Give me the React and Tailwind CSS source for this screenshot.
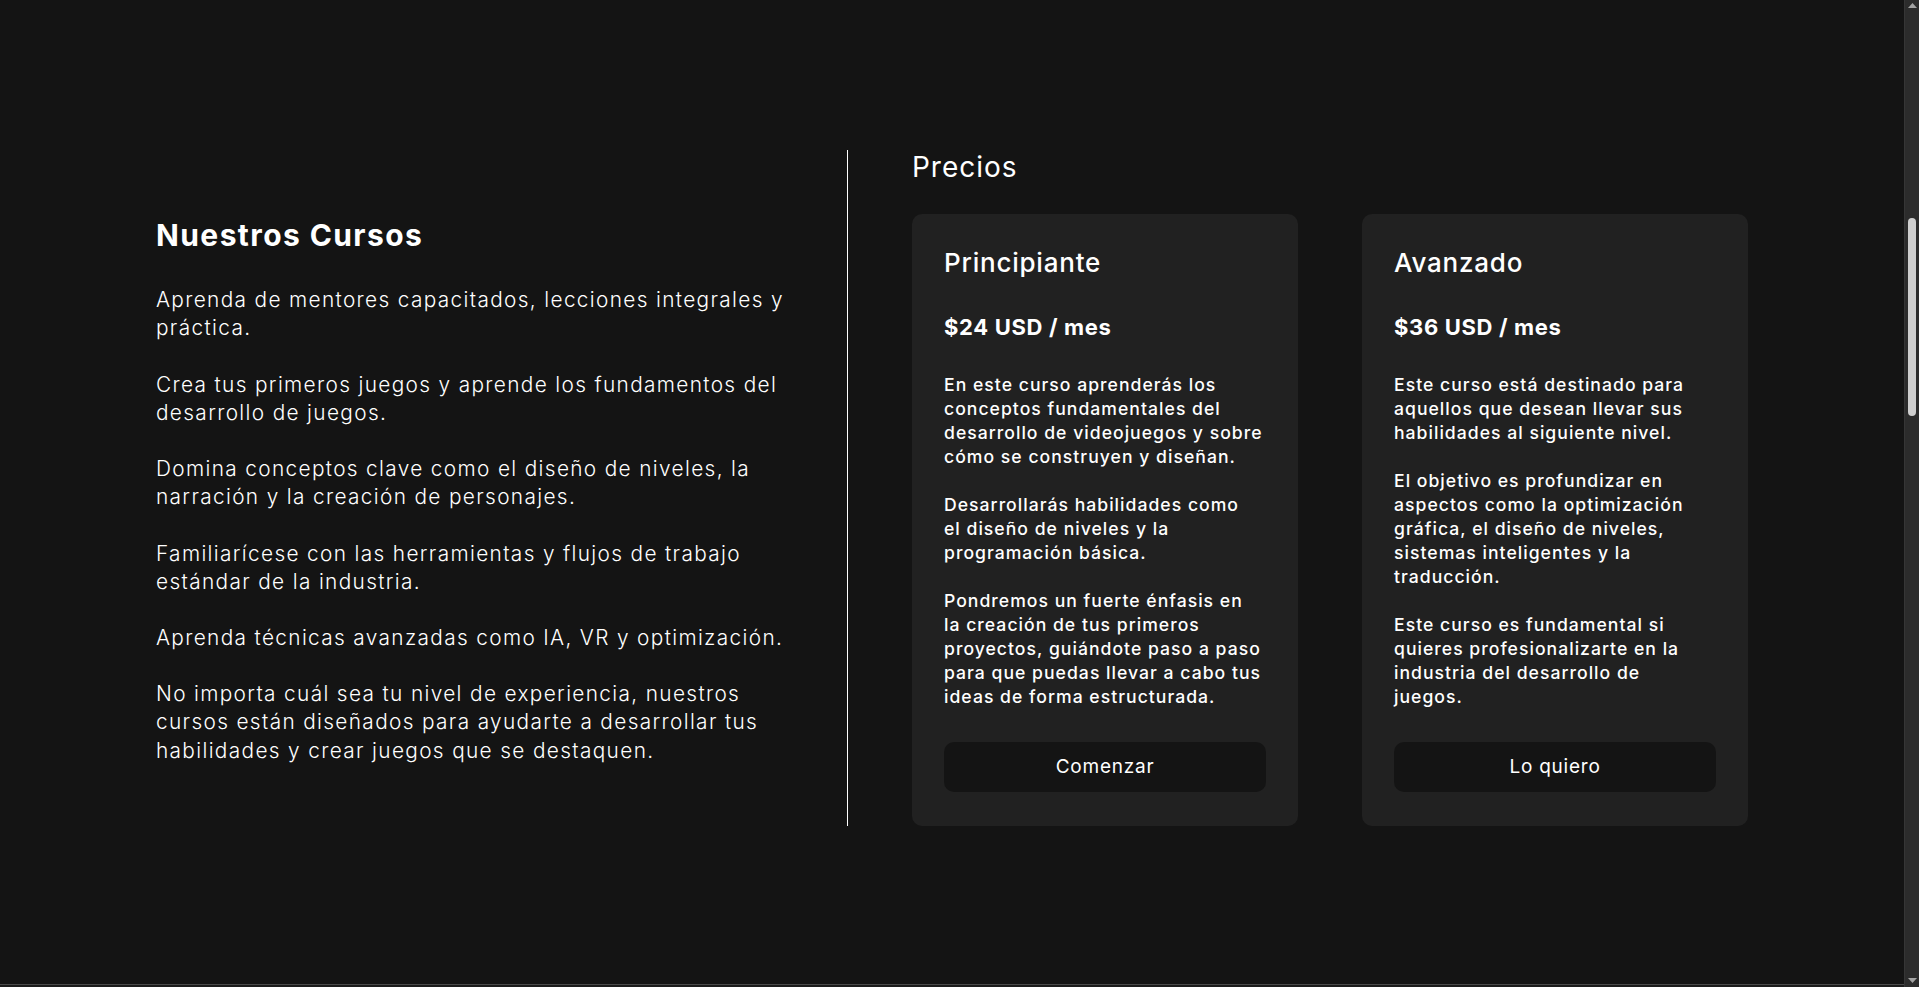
const intro = [
  "Aprenda de mentores capacitados, lecciones integrales y\npráctica.",
  "Crea tus primeros juegos y aprende los fundamentos del\ndesarrollo de juegos.",
  "Domina conceptos clave como el diseño de niveles, la\nnarración y la creación de personajes.",
  "Familiarícese con las herramientas y flujos de trabajo\nestándar de la industria.",
  "Aprenda técnicas avanzadas como IA, VR y optimización.",
  "No importa cuál sea tu nivel de experiencia, nuestros\ncursos están diseñados para ayudarte a desarrollar tus\nhabilidades y crear juegos que se destaquen.",
];

const plans = [
  {
    name: "Principiante",
    price: "$24 USD / mes",
    text: [
      "En este curso aprenderás los\nconceptos fundamentales del\ndesarrollo de videojuegos y sobre\ncómo se construyen y diseñan.",
      "Desarrollarás habilidades como\nel diseño de niveles y la\nprogramación básica.",
      "Pondremos un fuerte énfasis en\nla creación de tus primeros\nproyectos, guiándote paso a paso\npara que puedas llevar a cabo tus\nideas de forma estructurada.",
    ],
    cta: "Comenzar",
  },
  {
    name: "Avanzado",
    price: "$36 USD / mes",
    text: [
      "Este curso está destinado para\naquellos que desean llevar sus\nhabilidades al siguiente nivel.",
      "El objetivo es profundizar en\naspectos como la optimización\ngráfica, el diseño de niveles,\nsistemas inteligentes y la\ntraducción.",
      "Este curso es fundamental si\nquieres profesionalizarte en la\nindustria del desarrollo de\njuegos.",
    ],
    cta: "Lo quiero",
  },
];

function PlanCard({ plan }) {
  return (
    <div className="flex flex-col rounded-[10px] bg-[#212121] px-[32px] pt-[33px] pb-[34px]">
      <h3 className="text-[26px] leading-[32px] font-medium tracking-[0.03em]">{plan.name}</h3>
      <p className="mt-[34px] text-[22px] leading-[28px] font-bold tracking-[0.03em]">{plan.price}</p>
      <div className="mt-[32px] flex-1 space-y-[24px] whitespace-pre-line text-[17.6px] leading-[24px] font-medium tracking-[0.058em]">
        {plan.text.map((t, i) => (
          <p key={i}>{t}</p>
        ))}
      </div>
      <button className="mt-[33px] h-[50px] w-full rounded-[10px] bg-[#141414] text-[19px] font-normal tracking-[0.04em] text-white">
        {plan.cta}
      </button>
    </div>
  );
}

// windows-style dark scrollbar of the browser window
function ScrollBar() {
  return (
    <div className="flex w-[15px] flex-col items-center border-l border-[#363636] bg-[#2c2c2c]">
      <svg className="mt-[3px]" width="9" height="5" viewBox="0 0 9 5">
        <path d="M4.5 0 9 5H0z" fill="#a3a3a3" />
      </svg>
      <div className="mt-[210px] h-[198px] w-[8px] rounded-full bg-[#cfcfcf]" />
      <svg className="mt-auto mb-[4px]" width="9" height="5" viewBox="0 0 9 5">
        <path d="M0 0h9L4.5 5z" fill="#a3a3a3" />
      </svg>
    </div>
  );
}

export default function App() {
  return (
    <div className="flex h-screen overflow-hidden bg-[#141414] font-['Inter',sans-serif] text-white">
      <main className="flex flex-1 flex-col">
        <section className="flex-1 pt-[150px]">
          <div className="mx-auto flex w-[1592px] items-center">
            {/* Cursos */}
            <div className="w-[691px] pt-[7px] pr-[40px]">
              <h2 className="text-[30px] leading-[34px] font-bold tracking-[0.047em]">Nuestros Cursos</h2>
              <div className="mt-[34px] space-y-[28px] whitespace-pre-line text-[20.8px] leading-[28.2px] font-light tracking-[0.065em]">
                {intro.map((t, i) => (
                  <p key={i}>{t}</p>
                ))}
              </div>
            </div>

            {/* Precios */}
            <div className="flex-1 border-l border-white pl-[64px]">
              <h2 className="text-[28px] leading-[34px] font-normal tracking-[0.035em]">Precios</h2>
              <div className="mt-[30px] grid grid-cols-2 gap-[64px]">
                {plans.map((p) => (
                  <PlanCard key={p.name} plan={p} />
                ))}
              </div>
            </div>
          </div>
        </section>
        <div className="h-[3px] border-t border-[#4a4a4a] bg-[#1c1c1c]" />
      </main>
      <ScrollBar />
    </div>
  );
}
